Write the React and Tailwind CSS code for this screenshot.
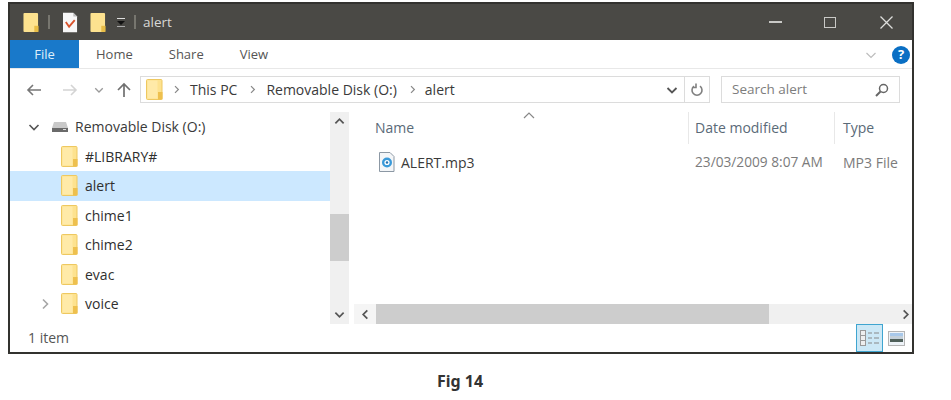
import React from "react";

const Folder = ({ className = "" }) => (
  <svg width="17" height="21" viewBox="0 0 17 21" className={className}>
    <rect x="0.5" y="0.5" width="15.5" height="20" rx="1" fill="#fde28f" stroke="#eec860" />
    <rect x="12" y="13" width="4.5" height="7.5" fill="#eec04e" />
    <rect x="1.5" y="1.5" width="10" height="18" fill="#ffeaa8" />
  </svg>
);

const Chevron = ({ d, color = "#555", w = 12, h = 12, sw = 1.6 }) => (
  <svg width={w} height={h} viewBox="0 0 12 12" fill="none" stroke={color} strokeWidth={sw}>
    <path d={d} />
  </svg>
);

const down = "M1.5 4 L6 8.5 L10.5 4";
const up = "M1.5 8 L6 3.5 L10.5 8";
const right = "M4 1.5 L8.5 6 L4 10.5";
const left = "M8 1.5 L3.5 6 L8 10.5";

const TreeRow = ({ label, selected, expander }) => (
  <div className={`flex items-center h-[29.5px] pl-[51px] ${selected ? "bg-[#cce8ff]" : ""} relative`}>
    {expander && (
      <span className="absolute left-[29px] top-[9px]">
        <Chevron d={right} color="#a6a6a6" />
      </span>
    )}
    <Folder />
    <span className="ml-[7px] text-[14px] text-[#2f2f2f]">{label}</span>
  </div>
);

export default function App() {
  return (
    <div className="w-[951px] h-[400px] bg-white overflow-hidden pl-[8px] pt-[2px]" style={{ fontFamily: '"Open Sans", "Noto Sans", sans-serif' }}>
      <div className="w-[906px] h-[352px] border-2 border-[#33322f] flex flex-col bg-white">
        {/* Title bar */}
        <div className="h-[36px] bg-[#4a4945] flex items-center shrink-0 pl-[13px]">
          <svg width="16" height="21" viewBox="0 0 17 21">
            <rect x="0.5" y="0.5" width="15.5" height="20" rx="1" fill="#fde28f" />
            <rect x="12" y="14" width="4.5" height="6.5" fill="#e9bd45" />
          </svg>
          <div className="w-[2px] h-[14px] bg-[#77766f] ml-[9px]" />
          <svg width="15" height="21" viewBox="0 0 16 21" className="ml-[13px]">
            <path d="M0 0H11L15 4V21H0Z" fill="#f7f7f7" />
            <path d="M11 0V4H15Z" fill="#bbb" />
            <path d="M3 10 L6.5 15 L12.5 8" stroke="#d9532c" strokeWidth="2" fill="none" />
          </svg>
          <svg width="16" height="21" viewBox="0 0 17 21" className="ml-[12px]">
            <rect x="0.5" y="0.5" width="15.5" height="20" rx="1" fill="#fde28f" />
            <rect x="12" y="14" width="4.5" height="6.5" fill="#e9bd45" />
          </svg>
          <svg width="10" height="9" viewBox="0 0 10 9" className="ml-[10px]">
            <rect x="1" y="0" width="8" height="1" fill="#ddd" />
            <path d="M1 3H9L5 7Z" fill="#111" />
            <rect x="1" y="8" width="8" height="1" fill="#aaa" />
          </svg>
          <div className="w-[2px] h-[14px] bg-[#77766f] ml-[8px]" />
          <span className="ml-[7px] text-[13.5px] text-[#d8d8d6] pt-[1px]">alert</span>
          <div className="ml-auto flex items-center pr-[19px]">
            <div className="w-[13px] h-[1.5px] bg-[#c9c9c6]" />
            <div className="w-[12px] h-[11px] border-[1.5px] border-[#c9c9c6] ml-[42px]" />
            <svg width="13" height="13" viewBox="0 0 13 13" className="ml-[44px]" stroke="#dededc" strokeWidth="1.3">
              <path d="M0.5 0.5 L12.5 12.5 M12.5 0.5 L0.5 12.5" />
            </svg>
          </div>
        </div>

        {/* Ribbon tabs */}
        <div className="h-[29px] flex items-center shrink-0 border-b border-[#e8e8e8] text-[13px] text-[#555]">
          <div className="w-[69px] h-full bg-[#1979ca] text-[#dfeefa] flex items-center justify-center pt-[2px]">File</div>
          <span className="ml-[17px] pt-[2px]">Home</span>
          <span className="ml-[36px] pt-[2px]">Share</span>
          <span className="ml-[36px] pt-[2px]">View</span>
          <div className="ml-auto flex items-center pr-[2px] pt-[1px]">
            <Chevron d={down} color="#bdbdbd" sw={1.2} />
            <div className="ml-[15px] w-[18px] h-[18px] rounded-full bg-[#0a6fc4] text-white text-[13px] font-bold flex items-center justify-center">?</div>
          </div>
        </div>

        {/* Address row */}
        <div className="h-[39px] flex items-center shrink-0 pl-[16px] pr-[12px] pt-[2px]">
          <svg width="16" height="14" viewBox="0 0 16 14" fill="none" stroke="#777" strokeWidth="1.6">
            <path d="M15 7H2 M7 2 L2 7 L7 12" />
          </svg>
          <svg width="16" height="14" viewBox="0 0 16 14" fill="none" stroke="#d4d4d4" strokeWidth="1.6" className="ml-[20px]">
            <path d="M1 7H14 M9 2 L14 7 L9 12" />
          </svg>
          <span className="ml-[16px]"><Chevron d={down} color="#999" w={10} h={10} /></span>
          <svg width="16" height="16" viewBox="0 0 16 16" fill="none" stroke="#707070" strokeWidth="1.7" className="ml-[12px]">
            <path d="M8 15V2 M2 8 L8 2 L14 8" />
          </svg>
          <div className="ml-[8px] w-[570px] h-[27px] border border-[#dcdcdc] flex items-center pl-[5px]">
            <Folder />
            <span className="ml-[9px]"><Chevron d={right} color="#888" w={9} h={9} /></span>
            <span className="ml-[9px] text-[14px] text-[#3a3a3a]">This PC</span>
            <span className="ml-[11px]"><Chevron d={right} color="#888" w={9} h={9} /></span>
            <span className="ml-[9px] text-[14px] text-[#3a3a3a]">Removable Disk (O:)</span>
            <span className="ml-[11px]"><Chevron d={right} color="#888" w={9} h={9} /></span>
            <span className="ml-[8px] text-[14px] text-[#3a3a3a]">alert</span>
            <div className="ml-auto flex items-center h-full">
              <Chevron d={down} color="#555" sw={1.8} />
              <div className="ml-[6px] h-full border-l border-[#dcdcdc] w-[25px] flex items-center justify-center">
                <svg width="14" height="14" viewBox="0 0 14 14" fill="none" stroke="#808080" strokeWidth="1.6">
                  <path d="M4 3.2 A5 5 0 1 0 10 3.2 M6 0.5 V4.5 H2.5" />
                </svg>
              </div>
            </div>
          </div>
          <div className="ml-[11px] w-[179px] h-[27px] border border-[#dcdcdc] flex items-center pl-[10px] pr-[10px]">
            <span className="text-[13.5px] text-[#7d7d7d]">Search alert</span>
            <svg width="14" height="14" viewBox="0 0 14 14" fill="none" stroke="#666" className="ml-auto">
              <circle cx="8.5" cy="5.5" r="4" strokeWidth="1.5" />
              <path d="M5.5 8.5 L1 13" strokeWidth="2" />
            </svg>
          </div>
        </div>

        {/* Main */}
        <div className="flex-1 flex min-h-0">
          {/* Nav pane */}
          <div className="w-[320px] pt-[4px] shrink-0">
            <div className="flex items-center h-[29.5px] relative pl-[41px]">
              <span className="absolute left-[18px] top-[9px]"><Chevron d={down} color="#555" /></span>
              <svg width="18" height="12" viewBox="0 0 18 12">
                <path d="M3 1H15L17 7H1Z" fill="#c9c9c9" />
                <rect x="1" y="7" width="16" height="4" fill="#6a6a6a" />
                <rect x="12" y="8" width="3" height="1" fill="#ddd" />
              </svg>
              <span className="ml-[6px] text-[14px] text-[#3a3a3a]">Removable Disk (O:)</span>
            </div>
            <TreeRow label="#LIBRARY#" />
            <TreeRow label="alert" selected />
            <TreeRow label="chime1" />
            <TreeRow label="chime2" />
            <TreeRow label="evac" />
            <TreeRow label="voice" expander />
          </div>

          {/* Nav scrollbar */}
          <div className="w-[19px] h-[212px] mt-[4px] bg-[#f0f0f0] shrink-0 flex flex-col items-center justify-between py-[4px] relative">
            <Chevron d={up} color="#555" sw={1.9} w={11} h={11} />
            <div className="absolute left-0 right-0 top-[102px] h-[47px] bg-[#cdcdcd]" />
            <Chevron d={down} color="#555" sw={1.9} w={11} h={11} />
          </div>

          {/* File pane */}
          <div className="flex-1 min-w-0 pl-[5px] flex flex-col">
            <div className="h-[196px] relative">
              <svg width="14" height="8" viewBox="0 0 14 8" fill="none" stroke="#888" strokeWidth="1.2" className="absolute left-[168px] top-[3px]">
                <path d="M2 7 L7 2 L12 7" />
              </svg>
              <div className="flex h-[32px] mt-[4px] text-[14px] text-[#5a6a78]">
                <div className="w-[334px] pl-[21px] pt-[5px] shrink-0">Name</div>
                <div className="w-[146px] pl-[6px] pt-[5px] shrink-0 border-l border-[#e8e8e8]">Date modified</div>
                <div className="pl-[8px] pt-[5px] border-l border-[#e8e8e8]">Type</div>
              </div>
              <div className="flex items-center mt-[6px] h-[24px] text-[14px]">
                <div className="w-[334px] pl-[25px] flex items-center shrink-0">
                  <svg width="16" height="20" viewBox="0 0 16 20">
                    <path d="M0.5 0.5H11L15 4.5V19.5H0.5Z" fill="#f4f6f8" stroke="#8c98a4" />
                    <circle cx="8" cy="10.5" r="5" fill="#3a9ad9" />
                    <circle cx="8" cy="10.5" r="2.6" fill="#fff" />
                    <circle cx="8" cy="10.5" r="1.2" fill="#1f6fb0" />
                  </svg>
                  <span className="ml-[6px] text-[#3a3a3a]">ALERT.mp3</span>
                </div>
                <div className="w-[146px] pl-[7px] shrink-0 text-[#7b7b7b] text-[13.7px] whitespace-nowrap">23/03/2009 8:07 AM</div>
                <div className="pl-[9px] text-[#7b7b7b] whitespace-nowrap overflow-hidden">MP3 File</div>
              </div>
            </div>
            {/* H scrollbar */}
            <div className="h-[20px] bg-[#f0f0f0] flex items-center relative">
              <span className="w-[22px] flex justify-center bg-[#f5f5f5] h-full items-center"><Chevron d={left} color="#555" sw={1.9} w={11} h={11} /></span>
              <div className="w-[393px] h-full bg-[#cdcdcd]" />
              <span className="ml-auto mr-[1px]"><Chevron d={right} color="#555" sw={1.9} w={11} h={11} /></span>
            </div>
          </div>
        </div>

        {/* Status bar */}
        <div className="h-[28px] flex items-center shrink-0 pl-[18px] pr-[7px] text-[14px] text-[#555]">
          <span className="pb-[2px]">1 item</span>
          <div className="ml-auto flex items-center h-full">
            <div className="w-[27px] h-full bg-[#cce8f6] border border-[#3fa5d0] flex items-center justify-center">
              <svg width="20" height="16" viewBox="0 0 20 16" fill="none">
                <rect x="0.5" y="0.5" width="5" height="15" fill="#eee" stroke="#999" />
                <path d="M0 5.5H6 M0 10.5H6" stroke="#999" />
                <path d="M8 3H12 M14 3H19 M8 8H12 M14 8H19 M8 13H12 M14 13H19" stroke="#888" />
              </svg>
            </div>
            <svg width="17" height="15" viewBox="0 0 17 15" className="ml-[5px]">
              <rect x="0.5" y="0.5" width="16" height="14" fill="#eef3f8" stroke="#b5b5b5" />
              <rect x="2" y="2" width="13" height="3" fill="#a8c8ea" />
              <rect x="2" y="5" width="13" height="3" fill="#c4d0da" />
              <rect x="2" y="8" width="13" height="3" fill="#50605a" />
            </svg>
          </div>
        </div>
      </div>

      <div className="w-[904px] text-center pt-[15px] text-[16px] font-bold text-[#333]" style={{ fontFamily: '"Noto Sans", sans-serif' }}>
        Fig 14
      </div>
    </div>
  );
}
